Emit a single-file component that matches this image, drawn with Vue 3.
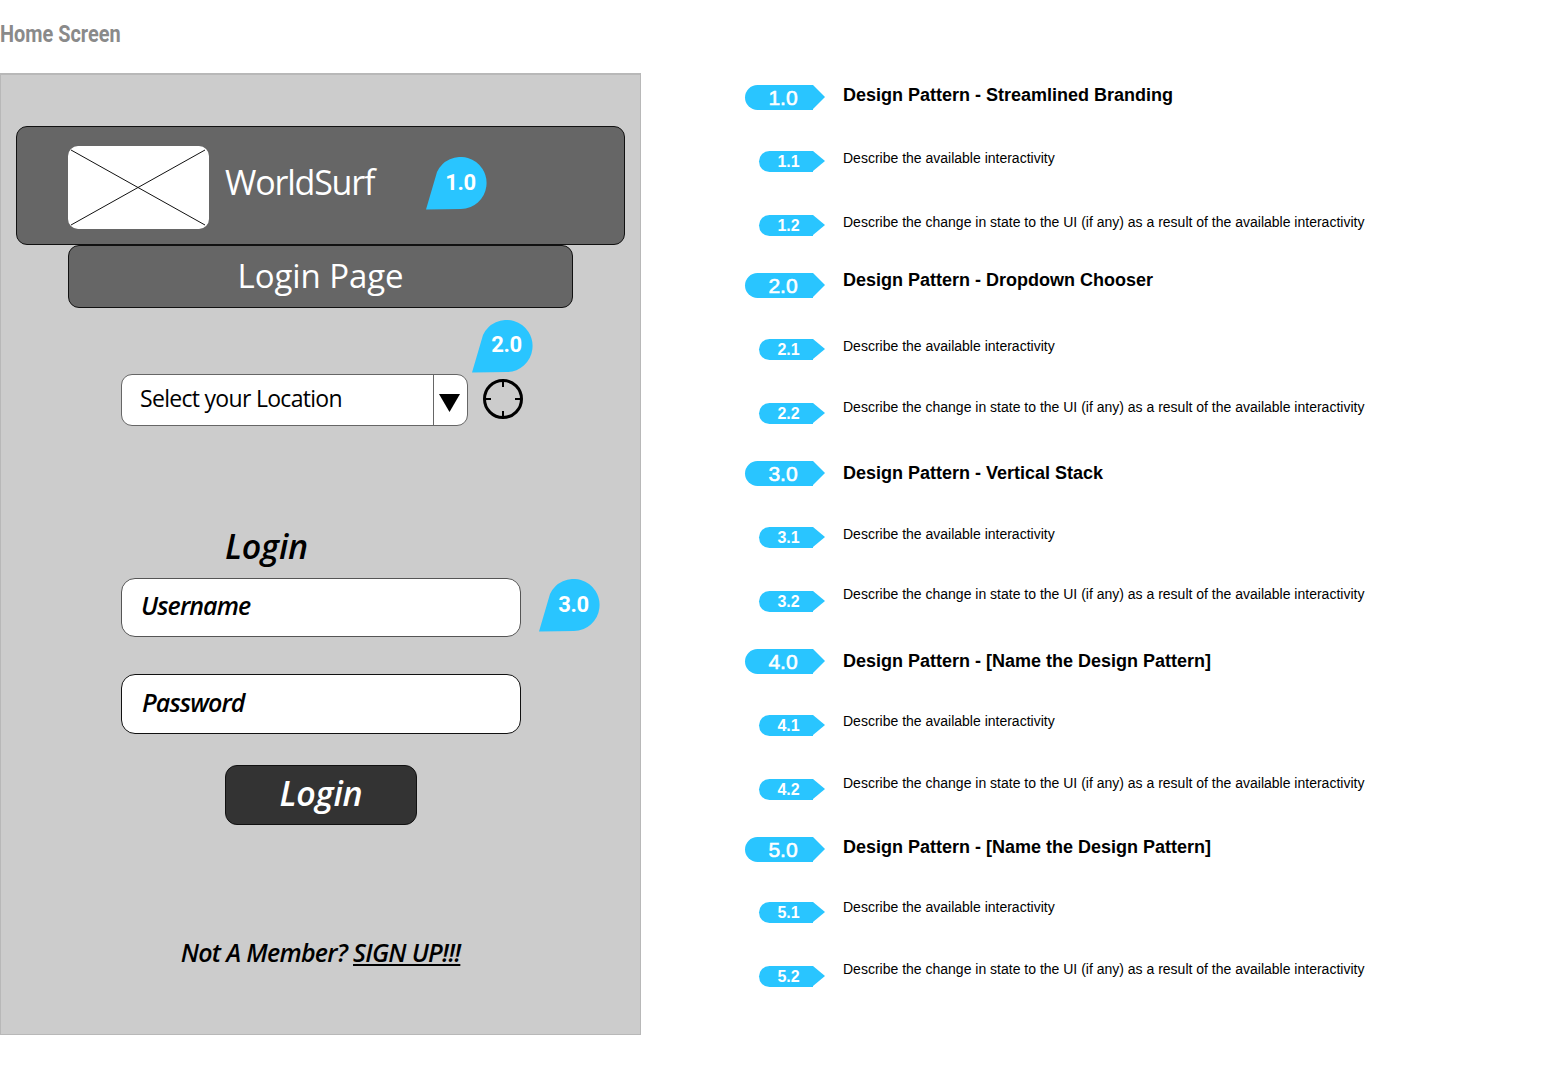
<script setup>
const rowData = [
  ['1.0', 'Design Pattern - Streamlined Branding', 98, 95],
  ['1.1', 'Describe the available interactivity', 161, 158],
  ['1.2', 'Describe the change in state to the UI (if any) as a result of the available interactivity', 225, 222],
  ['2.0', 'Design Pattern - Dropdown Chooser', 286, 280],
  ['2.1', 'Describe the available interactivity', 349, 346],
  ['2.2', 'Describe the change in state to the UI (if any) as a result of the available interactivity', 413, 407],
  ['3.0', 'Design Pattern - Vertical Stack', 474, 473],
  ['3.1', 'Describe the available interactivity', 537, 534],
  ['3.2', 'Describe the change in state to the UI (if any) as a result of the available interactivity', 601, 594],
  ['4.0', 'Design Pattern - [Name the Design Pattern]', 662, 661],
  ['4.1', 'Describe the available interactivity', 725, 721],
  ['4.2', 'Describe the change in state to the UI (if any) as a result of the available interactivity', 789, 783],
  ['5.0', 'Design Pattern - [Name the Design Pattern]', 850, 847],
  ['5.1', 'Describe the available interactivity', 912, 907],
  ['5.2', 'Describe the change in state to the UI (if any) as a result of the available interactivity', 976, 969]
]
const rows = rowData.map(([num, text, badgeY, textY], i) => ({
  num,
  text,
  major: num.endsWith('.0'),
  gap: i === 0 ? 0 : badgeY - rowData[i - 1][2] - 26,
  lift: (badgeY - textY) * 2
}))
const bubbles = { header: '1.0', select: '2.0', user: '3.0' }
</script>

<template>
  <div class="page">
    <section class="left">
      <h1 class="title">Home Screen</h1>
      <div class="phone">
        <header class="brand">
          <div class="logo">
            <svg viewBox="0 0 141 83" width="141" height="83">
              <path d="M3 4 L137 79 M137 4 L3 79" stroke="#111" stroke-width="1" fill="none" />
            </svg>
          </div>
          <span class="brand-name">WorldSurf</span>
          <div class="bubble bubble-header">
            <svg viewBox="0 0 62 53" width="62" height="53"><path class="drop" d="M11 15 A26 26 0 1 1 35 52 Q20 52 0 52.500 Z" /></svg>
            <span>{{ bubbles.header }}</span>
          </div>
        </header>
        <div class="subhead">Login Page</div>
        <div class="select-row">
          <div class="select">
            <span class="select-label">Select your Location</span>
            <span class="select-arrow">
              <svg viewBox="0 0 21 18" width="21" height="18"><path d="M0 0 H21 L10.500 18 Z" fill="#000" /></svg>
            </span>
          </div>
          <svg class="target" viewBox="0 0 40 40" width="40" height="40">
            <circle cx="20" cy="20" r="18.500" fill="none" stroke="#000" stroke-width="3" />
            <path d="M20 1 V8 M20 32 V39 M1 20 H8 M32 20 H39" stroke="#000" stroke-width="2" />
          </svg>
          <div class="bubble bubble-select">
            <svg viewBox="0 0 62 53" width="62" height="53"><path class="drop" d="M11 15 A26 26 0 1 1 35 52 Q20 52 0 52.500 Z" /></svg>
            <span>{{ bubbles.select }}</span>
          </div>
        </div>
        <h2 class="login-title">Login</h2>
        <div class="field field-user">
          Username
          <div class="bubble bubble-user">
            <svg viewBox="0 0 62 53" width="62" height="53"><path class="drop" d="M11 15 A26 26 0 1 1 35 52 Q20 52 0 52.500 Z" /></svg>
            <span>{{ bubbles.user }}</span>
          </div>
        </div>
        <div class="field field-pass">Password</div>
        <div class="login-btn">Login</div>
        <p class="signup">Not A Member? <u>SIGN UP!!!</u></p>
      </div>
    </section>

    <section class="notes">
      <div
        v-for="row in rows"
        :key="row.num"
        class="row"
        :style="{ marginTop: row.gap + 'px' }"
      >
        <div class="badge-cell" :class="{ top: row.major }">
          <div class="badge" :class="{ major: row.major }">{{ row.num }}</div>
        </div>
        <div
          class="note"
          :class="{ strong: row.major }"
          :style="{ marginBottom: row.lift + 'px' }"
        >{{ row.text }}</div>
      </div>
    </section>
  </div>
</template>

<style>
html, body { margin: 0; background: #fff; }
</style>

<style scoped>
.page {
  display: flex;
  width: 1542px;
  height: 1073px;
  overflow: hidden;
  background: #fff;
}
.left { width: 641px; flex: none; }
.title {
  margin: 0;
  height: 73px;
  padding-top: 22px;
  box-sizing: border-box;
  font: 700 23px/26px "Roboto", sans-serif;
  color: #8a8a8a;
  transform: scaleX(0.865);
  transform-origin: left center;
}
.phone {
  box-sizing: border-box;
  width: 641px;
  height: 962px;
  background: #ccc;
  border: 1px solid #b8b8b8;
  border-top-width: 2px;
  padding-top: 51px;
  font-family: "Open Sans", sans-serif;
}
.brand {
  position: relative;
  box-sizing: border-box;
  display: flex;
  align-items: flex-start;
  width: 609px;
  height: 119px;
  margin-left: 15px;
  padding: 19px 0 0 51px;
  background: #666;
  border: 1px solid #111;
  border-radius: 11px;
}
.logo {
  width: 141px;
  height: 83px;
  background: #fff;
  border-radius: 10px;
  flex: none;
}
.logo svg { display: block; }
.brand-name {
  margin: 13px 0 0 16px;
  font-size: 34px;
  line-height: 47px;
  letter-spacing: -1.2px;
  color: #fff;
}
.subhead {
  box-sizing: border-box;
  width: 505px;
  height: 63px;
  margin: 0 0 0 67px;
  background: #666;
  border: 1px solid #111;
  border-radius: 11px;
  font-size: 33px;
  line-height: 60px;
  letter-spacing: -0.1px;
  text-align: center;
  color: #fff;
}
.select-row {
  position: relative;
  display: flex;
  align-items: center;
  gap: 14px;
  margin: 66px 0 0 120px;
}
.select {
  box-sizing: border-box;
  display: flex;
  width: 347px;
  height: 52px;
  background: #fff;
  border: 1px solid #666;
  border-radius: 11px;
}
.select-label {
  flex: 1;
  padding-left: 18px;
  font-size: 23px;
  line-height: 47px;
  letter-spacing: -0.7px;
  color: #000;
}
.select-arrow {
  box-sizing: border-box;
  display: flex;
  align-items: center;
  justify-content: center;
  width: 34px;
  padding: 5px 2px 0 0;
  border-left: 1px solid #666;
}
.target { flex: none; margin-left: 1px; margin-top: -2px; }
.login-title {
  margin: 98px 0 0 224px;
  height: 54px;
  font-size: 34px;
  line-height: 44px;
  font-weight: 600;
  font-style: italic;
  letter-spacing: -0.2px;
  color: #000;
}
.field {
  position: relative;
  box-sizing: border-box;
  width: 400px;
  height: 60px;
  margin-left: 120px;
  padding-left: 19px;
  background: #fff;
  border-radius: 14px;
  font-size: 25px;
  line-height: 55px;
  font-weight: 600;
  font-style: italic;
  letter-spacing: -0.9px;
  color: #000;
}
.field-user { height: 59px; line-height: 53px; border: 1px solid #555; }
.field-pass { margin-top: 37px; padding-left: 20px; border: 1px solid #111; }
.login-btn {
  box-sizing: border-box;
  width: 192px;
  height: 60px;
  margin: 31px 0 0 224px;
  background: #333;
  border: 1px solid #111;
  border-radius: 12px;
  font-size: 34px;
  line-height: 55px;
  font-weight: 600;
  font-style: italic;
  letter-spacing: -0.2px;
  text-align: center;
  color: #fff;
}
.signup {
  margin: 110px 0 0;
  font-size: 25px;
  line-height: 34px;
  font-weight: 600;
  font-style: italic;
  letter-spacing: -0.7px;
  text-align: center;
  color: #000;
}
.bubble {
  position: absolute;
  width: 62px;
  height: 53px;
}
.bubble svg { display: block; }
.drop { fill: #29c5ff; }
.bubble span {
  position: absolute;
  left: 7px;
  right: 0;
  top: 12px;
  text-align: center;
  font: 700 22px/28px "Roboto", sans-serif;
  letter-spacing: -0.3px;
  color: #fff;
}
.bubble-select span { top: 11px; }
.bubble-header { left: 409px; top: 30px; }
.bubble-select { left: 351px; top: -54px; }
.bubble-user { left: 417px; top: 0; }
.notes {
  box-sizing: border-box;
  flex: 1;
  padding: 85px 0 0 104px;
}
.row {
  display: flex;
  align-items: center;
  height: 26px;
}
.badge-cell {
  display: flex;
  justify-content: flex-end;
  width: 80px;
  flex: none;
  margin-right: 18px;
}
.badge-cell.top { align-self: flex-start; }
.badge {
  position: relative;
  box-sizing: border-box;
  width: 54px;
  margin-right: 12px;
  height: 21px;
  padding-left: 5px;
  background: #29c5ff;
  border-radius: 11px 0 0 11px;
  font: 700 16px/21px "Liberation Sans", sans-serif;
  text-align: center;
  color: #fff;
}
.badge::after {
  content: "";
  position: absolute;
  left: 100%;
  top: 0;
  border-left: 12px solid #29c5ff;
  border-top: 10.5px solid transparent;
  border-bottom: 10.5px solid transparent;
}
.badge.major {
  width: 68px;
  height: 25px;
  padding-left: 8px;
  border-radius: 13px 0 0 13px;
  font-size: 21px;
  font-weight: 400;
  -webkit-text-stroke: 0.6px #fff;
  line-height: 25px;
}
.badge.major::after {
  border-top-width: 12.5px;
  border-bottom-width: 12.5px;
}
.note {
  font: 400 14px/18px "Liberation Sans", sans-serif;
  white-space: nowrap;
  color: #000;
}
.note.strong {
  font-size: 18px;
  font-weight: 700;
}
</style>
